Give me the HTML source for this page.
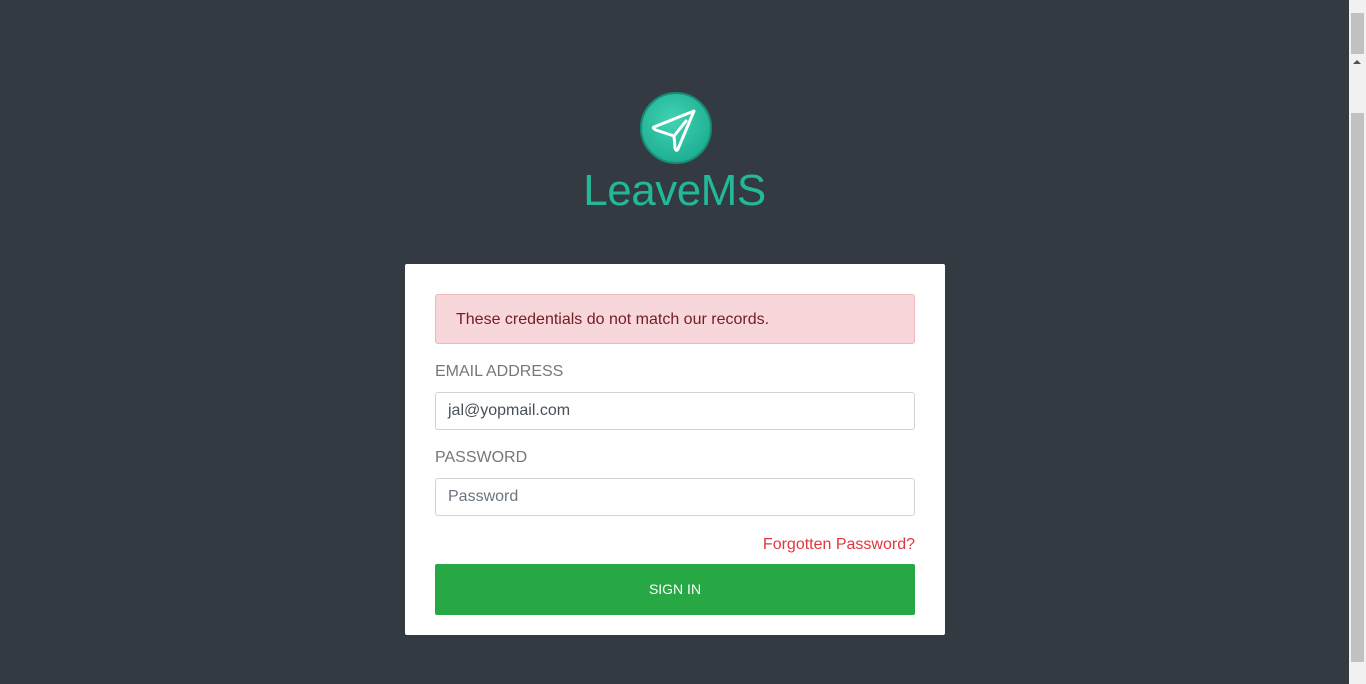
<!DOCTYPE html><html><head><style>
body{margin:0;width:1366px;height:684px;background:#343a42;font-family:"Liberation Sans",sans-serif;position:relative;overflow:hidden}
.sb{position:absolute;left:1349px;top:0;width:17px;height:684px;background:#f1f1f1}
.t{position:absolute;left:2px;width:13px;background:#c1c1c1}
.card{position:absolute;left:405px;top:264px;width:540px;height:371px;background:#fff;border-radius:2px}
.alert{position:absolute;left:30px;top:30px;background:#f8d7da;border:1px solid #f1b6bc;border-radius:3px;color:#721c24;font-size:16px;line-height:50px;padding-left:20px;box-sizing:border-box;width:480px;height:50px}
.lbl{position:absolute;left:30px;color:#7a7676;font-size:16px}
.in{position:absolute;left:30px;width:480px;height:38px;border:1px solid #ced4da;border-radius:3px;box-sizing:border-box;padding-left:12px;line-height:36px;font-size:16px;color:#495057}
.btn{position:absolute;left:30px;top:300px;width:480px;height:51px;background:#28a745;border-radius:2px;color:#fff;font-size:14px;text-align:center;line-height:51px}
</style></head><body>
<svg style="position:absolute;left:638px;top:91px" width="76" height="76" viewBox="0 0 76 76">
<defs><radialGradient id="g" cx="45%" cy="40%" r="60%"><stop offset="0" stop-color="#3fd4b4"/><stop offset="1" stop-color="#1fae92"/></radialGradient></defs>
<circle cx="38" cy="37" r="35" fill="url(#g)" stroke="#178a74" stroke-width="2"/>
<path d="M16 36 L56 20 L40 58 Q38 61 37 57 L36 45 L18 39 Q14 37 16 36 Z M36 45 L48 30" fill="none" stroke="#fff" stroke-width="3" stroke-linejoin="round" stroke-linecap="round"/>
</svg>
<div style="position:absolute;left:0;width:1349px;top:166px;text-align:center;color:#22b898;font-size:44px;letter-spacing:-0.5px">LeaveMS</div>
<div class="card">
<div class="alert">These credentials do not match our records.</div>
<div class="lbl" style="top:99px">EMAIL ADDRESS</div>
<div class="in" style="top:128px">jal@yopmail.com</div>
<div class="lbl" style="top:185px">PASSWORD</div>
<div class="in" style="top:214px;color:#6c757d">Password</div>
<div style="position:absolute;right:30px;top:272px;color:#e3343f;font-size:16px">Forgotten Password?</div>
<div class="btn">SIGN IN</div>
</div>
<div class="sb"><div class="t" style="top:13px;height:41px"></div><div style="position:absolute;left:4px;top:60px;border:4px solid transparent;border-bottom:4px solid #505050;border-top:0"></div><div class="t" style="top:113px;height:549px"></div></div>
</body></html>
